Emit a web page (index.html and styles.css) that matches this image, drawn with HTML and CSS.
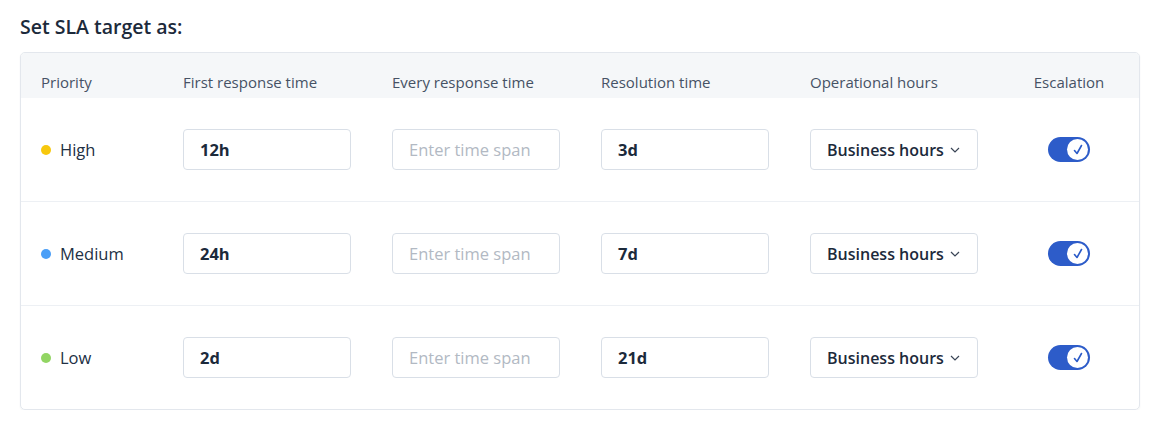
FILE: index.html
```html
<!DOCTYPE html>
<html>
<head>
<meta charset="utf-8">
<link rel="stylesheet" href="styles.css">
</head>
<body>
<div class="page">
  <h2 class="title">Set SLA target as:</h2>
  <div class="card">
    <div class="row head">
      <div class="cell">Priority</div>
      <div class="cell">First response time</div>
      <div class="cell">Every response time</div>
      <div class="cell">Resolution time</div>
      <div class="cell">Operational hours</div>
      <div class="cell center">Escalation</div>
    </div>

    <div class="row">
      <div class="cell prio"><span class="dot high"></span>High</div>
      <div class="cell"><div class="input">12h</div></div>
      <div class="cell"><div class="input ph">Enter time span</div></div>
      <div class="cell"><div class="input">3d</div></div>
      <div class="cell"><div class="input select">Business hours<svg class="chev" width="10" height="6" viewBox="0 0 10 6"><path d="M1 1l4 4 4-4" fill="none" stroke="#3a4556" stroke-width="1.2"/></svg></div></div>
      <div class="cell center"><span class="toggle"><span class="knob"><svg width="14" height="14" viewBox="0 0 14 14"><path d="M3.5 7.5l2.5 3 4.5-8" fill="none" stroke="#2b5bc8" stroke-width="1.6" stroke-linecap="round" stroke-linejoin="round"/></svg></span></span></div>
    </div>

    <div class="row">
      <div class="cell prio"><span class="dot medium"></span>Medium</div>
      <div class="cell"><div class="input">24h</div></div>
      <div class="cell"><div class="input ph">Enter time span</div></div>
      <div class="cell"><div class="input">7d</div></div>
      <div class="cell"><div class="input select">Business hours<svg class="chev" width="10" height="6" viewBox="0 0 10 6"><path d="M1 1l4 4 4-4" fill="none" stroke="#3a4556" stroke-width="1.2"/></svg></div></div>
      <div class="cell center"><span class="toggle"><span class="knob"><svg width="14" height="14" viewBox="0 0 14 14"><path d="M3.5 7.5l2.5 3 4.5-8" fill="none" stroke="#2b5bc8" stroke-width="1.6" stroke-linecap="round" stroke-linejoin="round"/></svg></span></span></div>
    </div>

    <div class="row last">
      <div class="cell prio"><span class="dot low"></span>Low</div>
      <div class="cell"><div class="input">2d</div></div>
      <div class="cell"><div class="input ph">Enter time span</div></div>
      <div class="cell"><div class="input">21d</div></div>
      <div class="cell"><div class="input select">Business hours<svg class="chev" width="10" height="6" viewBox="0 0 10 6"><path d="M1 1l4 4 4-4" fill="none" stroke="#3a4556" stroke-width="1.2"/></svg></div></div>
      <div class="cell center"><span class="toggle"><span class="knob"><svg width="14" height="14" viewBox="0 0 14 14"><path d="M3.5 7.5l2.5 3 4.5-8" fill="none" stroke="#2b5bc8" stroke-width="1.6" stroke-linecap="round" stroke-linejoin="round"/></svg></span></span></div>
    </div>
  </div>
</div>
</body>
</html>
```

FILE: styles.css
```css
* { box-sizing: border-box; }
body {
  margin: 0;
  background: #ffffff;
  font-family: "Open Sans", "Noto Sans", sans-serif;
  color: #1d2a3a;
}
.page {
  padding: 14px 16px 0 20px;
}
.title {
  margin: 0 0 12px 0;
  font-size: 19.5px;
  line-height: 26px;
  font-weight: 600;
  color: #1c2a3b;
}
.card {
  width: 1120px;
  border: 1px solid #e3e7ed;
  border-radius: 5px;
  box-shadow: 0 1px 2px rgba(30, 45, 70, 0.06);
  overflow: hidden;
}
.row {
  display: grid;
  grid-template-columns: 142px 209px 209px 209px 209px 1fr;
  align-items: center;
  padding: 0 20px;
  height: 104px;
  border-bottom: 1px solid #edf0f4;
}
.row.last { border-bottom: none; height: 103px; }
.row.head {
  height: 45px;
  padding-top: 18px;
  padding-bottom: 6px;
  background: #f5f7f9;
  border-bottom: none;
  font-size: 15px;
  font-weight: 500;
  color: #465265;
}
.cell.center {
  display: flex;
  justify-content: center;
}
.prio {
  display: flex;
  align-items: center;
  font-size: 16.5px;
  color: #223044;
}
.dot {
  width: 10px;
  height: 10px;
  border-radius: 50%;
  margin-right: 9px;
}
.dot.high { background: #f7c80d; }
.dot.medium { background: #4b9ff7; }
.dot.low { background: #92d563; }
.input {
  width: 168px;
  height: 41px;
  border: 1px solid #d9dfe7;
  border-radius: 4px;
  padding: 0 16px;
  display: flex;
  align-items: center;
  white-space: nowrap;
  font-size: 16.5px;
  font-weight: 700;
  color: #1c2a3b;
}
.input.ph {
  font-weight: 400;
  color: #b2b9c3;
}
.input.select {
  font-weight: 600;
  font-size: 16px;
  padding-right: 8px;
}
.chev { margin-left: 6px; margin-top: 1px; flex: none; }
.toggle {
  width: 42px;
  height: 25px;
  border-radius: 13px;
  background: #2d5cc9;
  display: flex;
  align-items: center;
  justify-content: flex-end;
  padding-right: 2px;
}
.knob {
  width: 21px;
  height: 21px;
  border-radius: 50%;
  background: #ffffff;
  display: flex;
  align-items: center;
  justify-content: center;
}
```
